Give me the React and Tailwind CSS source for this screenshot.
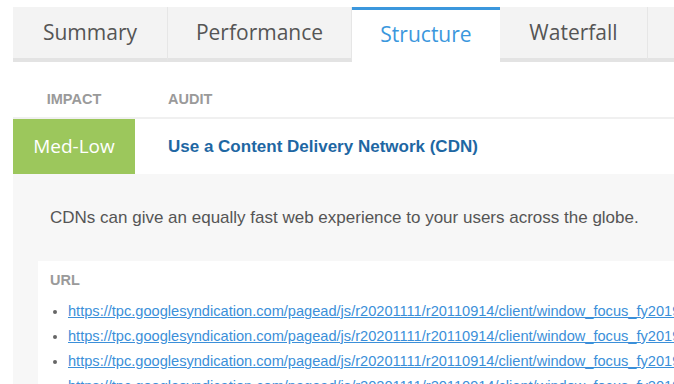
import React from 'react';

const tabs = ['Summary', 'Performance', 'Structure', 'Waterfall', 'Connection View'];
const widths = ['w-[155px]', 'w-[184px]', 'w-[148px]', 'w-[148px]', 'w-[240px]'];
const url =
  'https://tpc.googlesyndication.com/pagead/js/r20201111/r20110914/client/window_focus_fy2019.js';

export default function App() {
  return (
    <div className="h-[384px] w-[674px] overflow-hidden bg-white pl-[13px] pt-[7px] font-['Liberation_Sans',Arial,sans-serif]">
      <div className="flex w-[900px]">
        {tabs.map((t, i) => {
          const active = t === 'Structure';
          return (
            <div
              key={t}
              className={`flex h-[55px] shrink-0 items-center justify-center font-['Open_Sans',sans-serif] text-[21px] ${widths[i]} ${
                active
                  ? 'border-t-[3px] border-[#3b97dd] bg-white pb-[3px] text-[#3b97dd]'
                  : 'border-b-4 border-r border-b-[#e3e3e3] border-r-[#e6e6e6] bg-[#f3f3f3] text-[#555]'
              }`}
            >
              {t}
            </div>
          );
        })}
      </div>

      <div className="flex h-[57px] w-[900px] border-b-2 border-[#f0f0f0] pt-[29px] text-[14.5px] leading-[17px] font-bold text-[#9a9a9a]">
        <div className="w-[122px] text-center">IMPACT</div>
        <div className="pl-[33px]">AUDIT</div>
      </div>

      <div className="flex h-[55px] w-[900px]">
        <div className="flex w-[122px] items-center justify-center bg-[#9cc75c] font-['Open_Sans',sans-serif] text-[19px] text-white">
          Med-Low
        </div>
        <div className="flex items-center pl-[33px] text-[17px] font-bold text-[#1e67a3]">
          Use a Content Delivery Network (CDN)
        </div>
      </div>

      <div className="w-[900px] bg-[#f7f7f7] pl-[25px] pt-[33px]">
        <p className="pl-[12px] text-[17px] leading-[21px] text-[#555]">
          CDNs can give an equally fast web experience to your users across the globe.
        </p>
        <div className="mt-[33px] bg-white pl-[12px] pt-[11px]">
          <div className="text-[14.5px] leading-[17px] font-bold text-[#9a9a9a]">URL</div>
          <ul className="mt-[10px] list-disc pl-[18px] text-[14.6px] leading-[25px] text-[#666]">
            {[0, 1, 2, 3].map((k) => (
              <li key={k} className="whitespace-nowrap">
                <a href="#" className="text-[#3b8fd9] underline">
                  {url}
                </a>
              </li>
            ))}
          </ul>
        </div>
      </div>
    </div>
  );
}
